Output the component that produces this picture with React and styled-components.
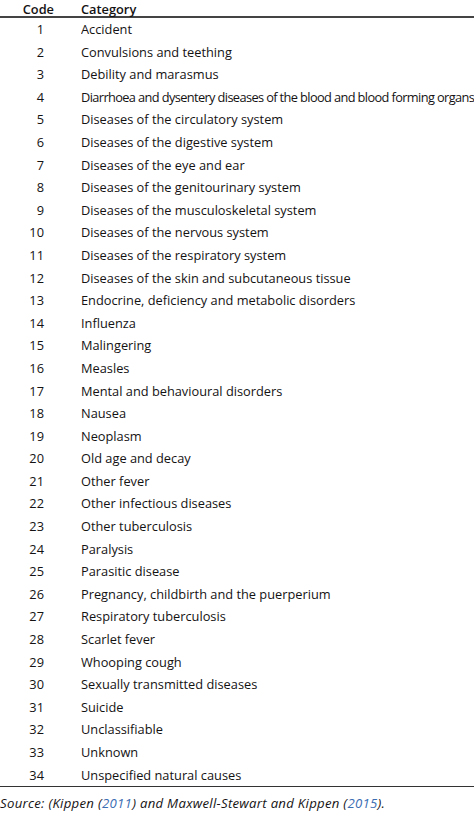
import React from 'react';
import styled, { createGlobalStyle } from 'styled-components';

const Global = createGlobalStyle`
  html, body {
    margin: 0;
    padding: 0;
    background: #fff;
  }
  body {
    font-family: "Open Sans", "DejaVu Sans", sans-serif;
    color: #141213;
  }
`

const Page = styled.div`
  width: 474px;
  overflow: hidden;
`

const Table = styled.table`
  border-collapse: collapse;
  width: 474px;
  table-layout: fixed;
  white-space: nowrap;
  font-size: 12.8px;
  border-bottom: 1px solid #333;
`

const HeadCell = styled.th`
  font-weight: 600;
  height: 16px;
  line-height: 14px;
  padding: 0;
  vertical-align: bottom;
  text-align: ${({align}) => align || 'left'};
  border-bottom: 2px solid #444;
  width: ${({w}) => w || 'auto'};
  padding-right: ${({pr}) => pr || '0'};
  overflow: visible;
`

const Row = styled.tr`
  height: 22.6px;
`

const CodeCell = styled.td`
  text-align: right;
  padding: 0 37px 0 0;
  font-variant-numeric: tabular-nums;
  line-height: 22.6px;
`

const NameCell = styled.td`
  padding: 0;
  line-height: 22.6px;
  overflow: hidden;
  letter-spacing: ${({tight}) => tight ? '-0.62px' : 'normal'};
`

const Source = styled.p`
  margin: 0;
  padding: 7px 0 0 0;
  font-size: 13.2px;
  letter-spacing: 0.28px;
  font-style: italic;
  line-height: 18px;
  white-space: nowrap;
  a {
    color: #3b6db3;
    text-decoration: none;
  }
`

const rows = [
  'Accident',
  'Convulsions and teething',
  'Debility and marasmus',
  'Diarrhoea and dysentery diseases of the blood and blood forming organs',
  'Diseases of the circulatory system',
  'Diseases of the digestive system',
  'Diseases of the eye and ear',
  'Diseases of the genitourinary system',
  'Diseases of the musculoskeletal system',
  'Diseases of the nervous system',
  'Diseases of the respiratory system',
  'Diseases of the skin and subcutaneous tissue',
  'Endocrine, deficiency and metabolic disorders',
  'Influenza',
  'Malingering',
  'Measles',
  'Mental and behavioural disorders',
  'Nausea',
  'Neoplasm',
  'Old age and decay',
  'Other fever',
  'Other infectious diseases',
  'Other tuberculosis',
  'Paralysis',
  'Parasitic disease',
  'Pregnancy, childbirth and the puerperium',
  'Respiratory tuberculosis',
  'Scarlet fever',
  'Whooping cough',
  'Sexually transmitted diseases',
  'Suicide',
  'Unclassifiable',
  'Unknown',
  'Unspecified natural causes',
]

export default function App () {
  return (
    <Page>
      <Global />
      <Table>
        <thead>
          <tr>
            <HeadCell align="right" w="54px" pr="27px">Code</HeadCell>
            <HeadCell>Category</HeadCell>
          </tr>
        </thead>
        <tbody>
          {rows.map((name, i) => (
            <Row key={name}>
              <CodeCell>{i + 1}</CodeCell>
              <NameCell tight={name.length > 60}>{name}</NameCell>
            </Row>
          ))}
        </tbody>
      </Table>
      <Source>
        Source: (Kippen (<a href="#">2011</a>) and Maxwell-Stewart and Kippen (<a href="#">2015</a>).
      </Source>
    </Page>
  )
}
